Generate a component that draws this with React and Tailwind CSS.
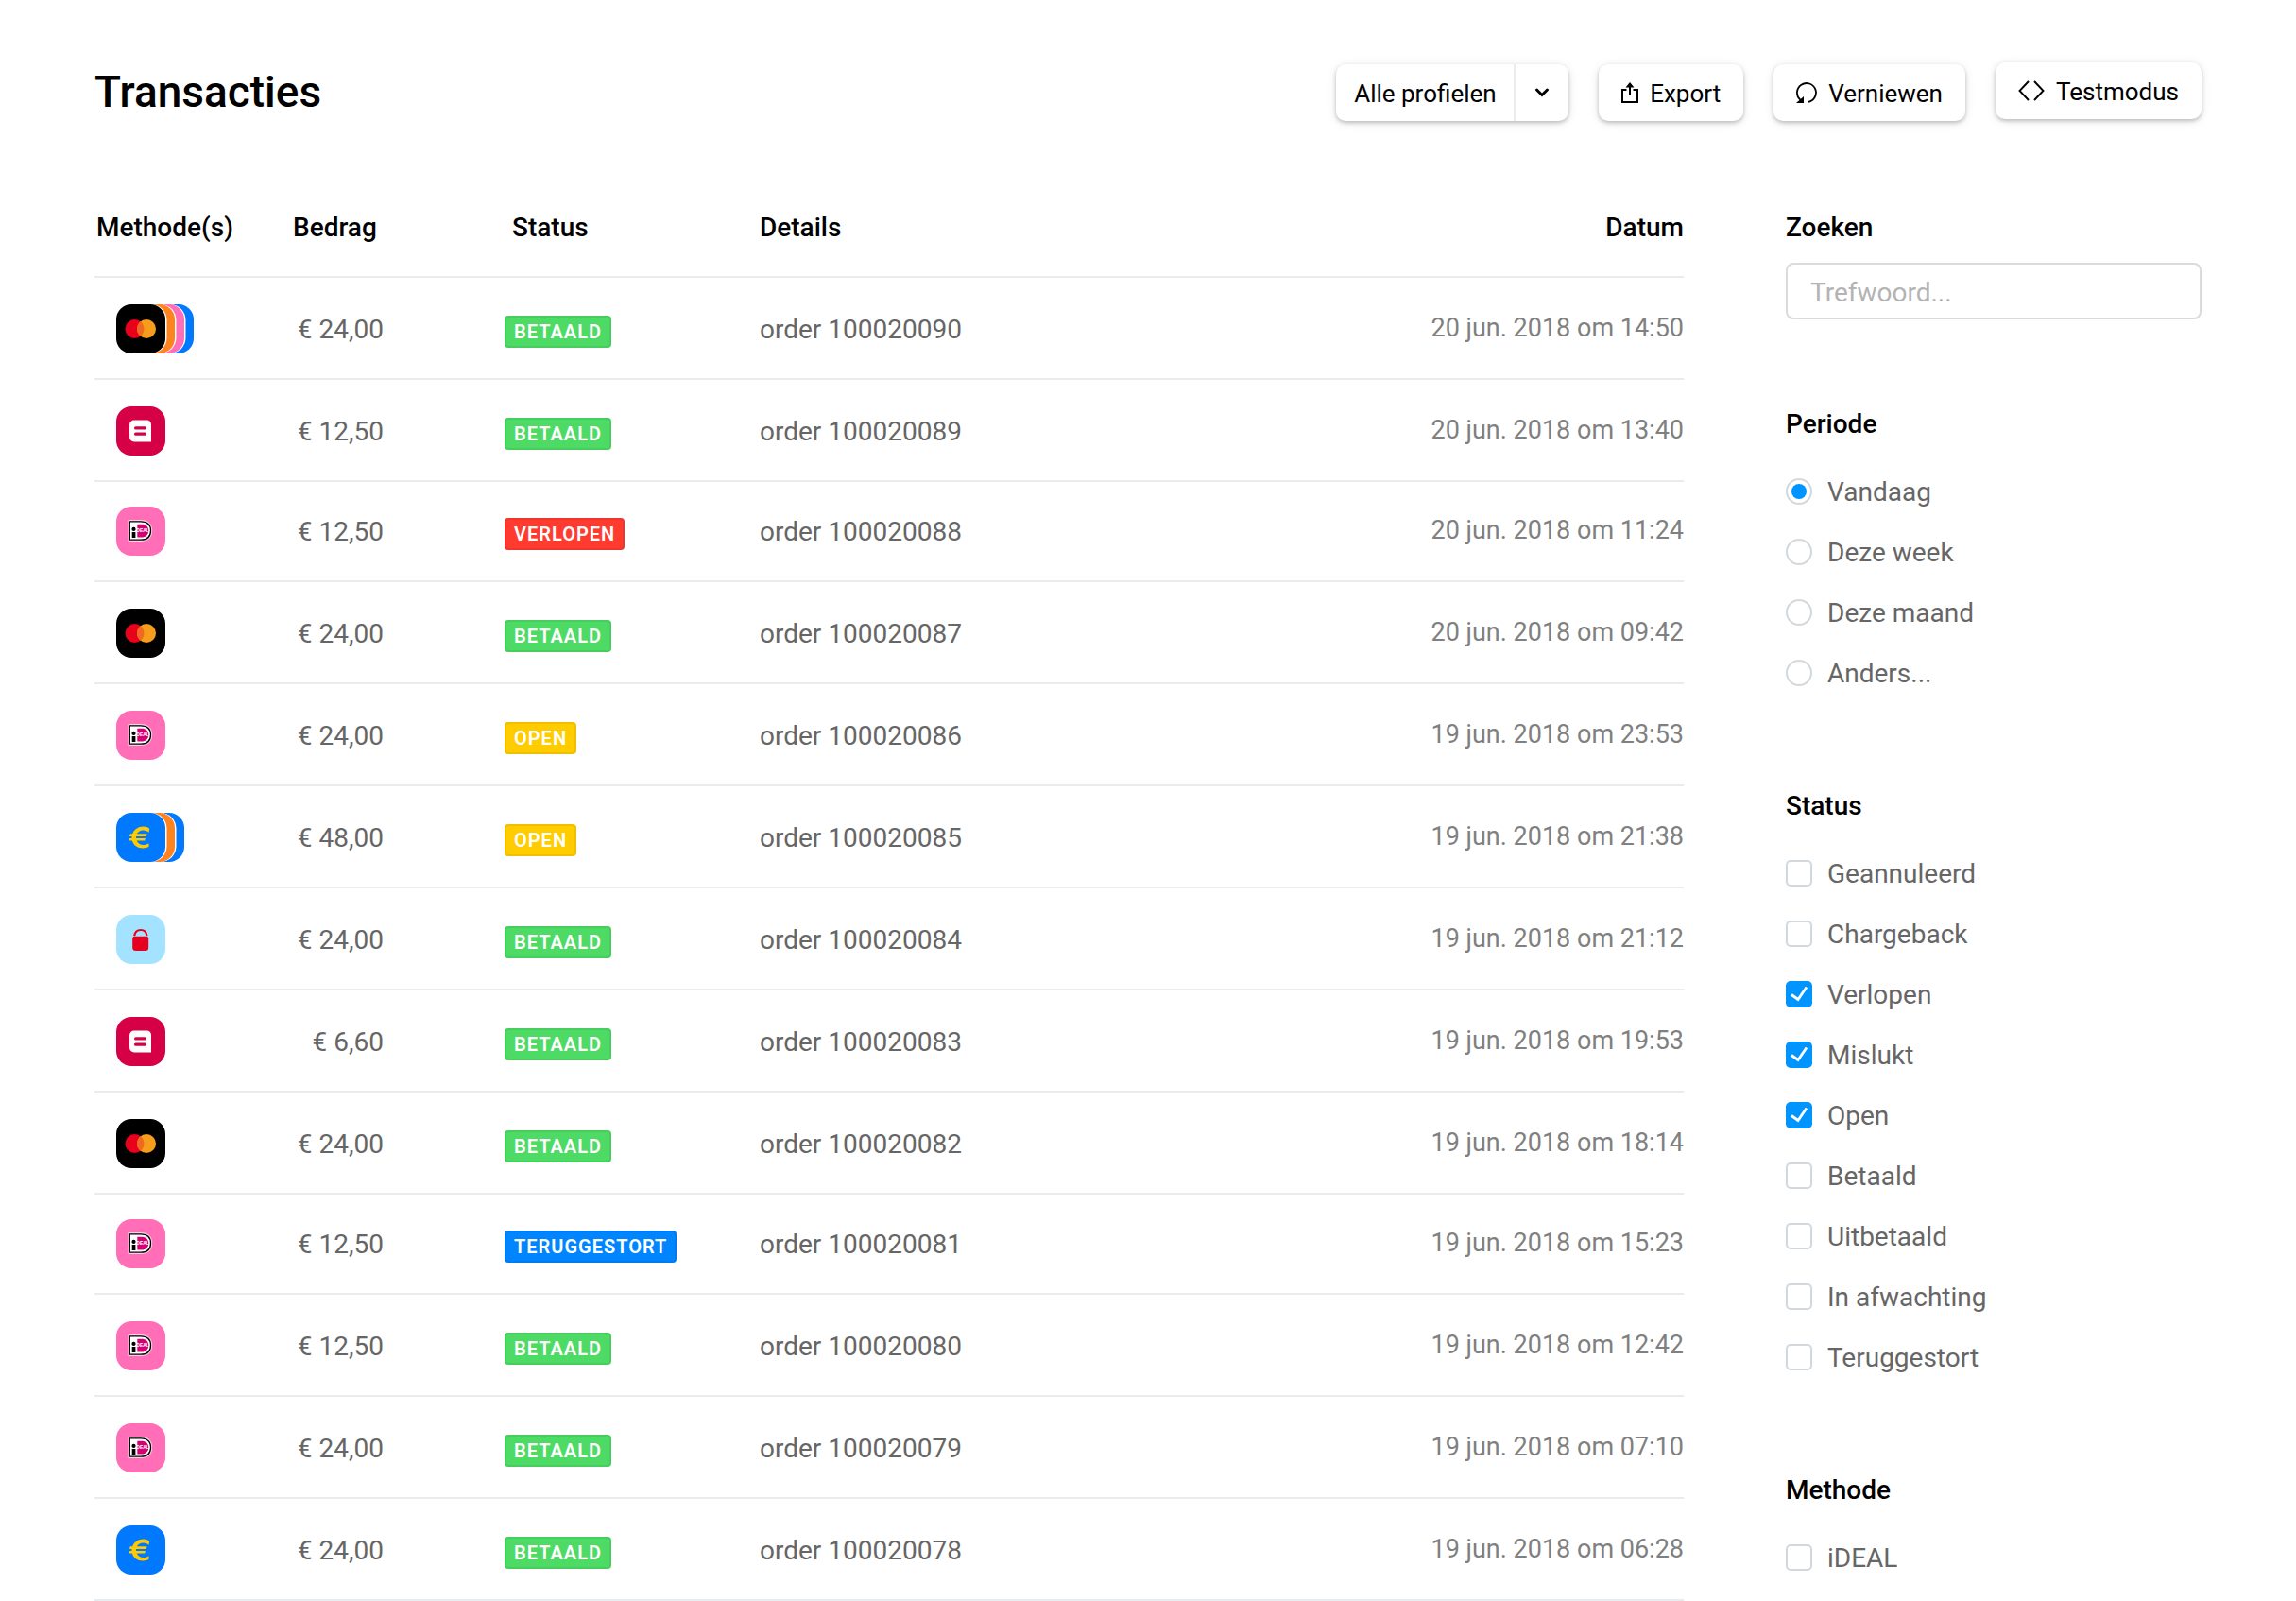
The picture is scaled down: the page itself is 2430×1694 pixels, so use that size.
import { useState } from "react";

const TRANSACTIONS = [
  { methods: ["mastercard", "orange", "pink", "blue"], amount: "€ 24,00", status: "Betaald", order: "100020090", date: "20 jun. 2018 om 14:50" },
  { methods: ["bancontact"], amount: "€ 12,50", status: "Betaald", order: "100020089", date: "20 jun. 2018 om 13:40" },
  { methods: ["ideal"], amount: "€ 12,50", status: "Verlopen", order: "100020088", date: "20 jun. 2018 om 11:24", compact: true },
  { methods: ["mastercard"], amount: "€ 24,00", status: "Betaald", order: "100020087", date: "20 jun. 2018 om 09:42" },
  { methods: ["ideal"], amount: "€ 24,00", status: "Open", order: "100020086", date: "19 jun. 2018 om 23:53" },
  { methods: ["euro", "orange", "blue"], amount: "€ 48,00", status: "Open", order: "100020085", date: "19 jun. 2018 om 21:38" },
  { methods: ["lock"], amount: "€ 24,00", status: "Betaald", order: "100020084", date: "19 jun. 2018 om 21:12" },
  { methods: ["bancontact"], amount: "€ 6,60", status: "Betaald", order: "100020083", date: "19 jun. 2018 om 19:53" },
  { methods: ["mastercard"], amount: "€ 24,00", status: "Betaald", order: "100020082", date: "19 jun. 2018 om 18:14" },
  { methods: ["ideal"], amount: "€ 12,50", status: "Teruggestort", order: "100020081", date: "19 jun. 2018 om 15:23", compact: true },
  { methods: ["ideal"], amount: "€ 12,50", status: "Betaald", order: "100020080", date: "19 jun. 2018 om 12:42" },
  { methods: ["ideal"], amount: "€ 24,00", status: "Betaald", order: "100020079", date: "19 jun. 2018 om 07:10" },
  { methods: ["euro"], amount: "€ 24,00", status: "Betaald", order: "100020078", date: "19 jun. 2018 om 06:28" },
];

const METHOD_COLORS = {
  mastercard: "#000000",
  bancontact: "#d50045",
  ideal: "#ff6eb6",
  euro: "#0079ff",
  lock: "#a4e3ff",
  orange: "#ff8420",
  pink: "#ff6eb6",
  blue: "#0079ff",
};

const STATUS_STYLES = {
  Betaald: "bg-[#4dda65] border-[#46cd5e]",
  Verlopen: "bg-[#ff3b30] border-[#ee362c]",
  Open: "bg-[#ffcc00] border-[#efbf00]",
  Teruggestort: "bg-[#0085ff] border-[#007bed]",
};

function MethodGlyph({ name }) {
  if (name === "mastercard") {
    return (
      <g>
        <circle cx="19.5" cy="26" r="10" fill="#e8001c" />
        <circle cx="32" cy="26" r="10" fill="#f69d1c" />
        <path d="M25.75 18.2a10 10 0 0 1 0 15.6a10 10 0 0 1 0-15.6z" fill="#ef6a20" />
      </g>
    );
  }
  if (name === "bancontact") {
    return (
      <g>
        <path d="M19 14.5h13.500a4.500 4.500 0 0 1 4.500 4.500v18.500h-18a5 5 0 0 1-5-5v-13a5 5 0 0 1 5-5z" fill="#fff" />
        <rect x="19" y="21.300" width="13" height="3.200" rx="1.600" fill="#d50045" />
        <rect x="19" y="27.600" width="13" height="3.200" rx="1.600" fill="#d50045" />
      </g>
    );
  }
  if (name === "ideal") {
    return (
      <g>
        <path d="M12.500 14h13.500c8 0 12.200 4.500 12.200 11.500S34 37 26 37H12.500z" fill="#f3d3e4" />
        <path d="M14.300 15.900h11.500c7 0 10.700 3.700 10.700 9.600s-3.700 9.700-10.700 9.700H14.300z" fill="#fff" stroke="#000" strokeWidth="1.300" />
        <path d="M22.300 18.700h4.200c5 0 7.700 2.500 7.700 6.800s-2.700 7-7.700 7h-4.200z" fill="#d50072" />
        <circle cx="18.500" cy="23.900" r="2.100" />
        <rect x="16.700" y="27" width="3.700" height="6" />
        <text x="21.300" y="26.600" fontSize="5" fontWeight="700" fontFamily="Liberation Sans, sans-serif" fill="#fff">DEAL</text>
      </g>
    );
  }
  if (name === "euro") {
    return (
      <g fill="#ffcb00">
        <path
          d="M35.200 16.800l-.7 3.900c-1.800-1.600-3.700-2.300-5.800-2.300-3.500 0-6 2-6.900 3.900h10.700l-.7 2.700H21c-.1.600-.1 1.200 0 1.900h9.900l-.7 2.600h-8.500c1 2.700 3.600 4.500 7.200 4.500 2.200 0 4-.6 5.600-1.800v3.900c-1.800.9-3.900 1.400-6.200 1.400-5.800 0-10.100-3.200-11.400-8H13l.8-2.600h2.700c-.1-.6-.1-1.300 0-1.900h-2.600l.8-2.700h2.500c1.700-4.600 6-7.700 11.500-7.700 2.500 0 4.700.8 6.500 2.200z"
        />
      </g>
    );
  }
  if (name === "lock") {
    return (
      <g>
        <path d="M19.200 22.200c.6-3.800 3-6.200 6.700-6.200s6.100 2.400 6.500 6.200" fill="none" stroke="#e6001f" strokeWidth="2.200" />
        <path d="M18.500 22.800h14.400l1.300 1.400v10.300a3.500 3.500 0 0 1-3.500 3.500H20.700a3.500 3.500 0 0 1-3.500-3.500V24.200z" fill="#e6001f" />
      </g>
    );
  }
  return null;
}

function MethodIcons({ methods }) {
  const width = 54 + (methods.length - 1) * 10;
  const layers = methods.map((name, index) => ({ name, x: index * 10 })).reverse();
  return (
    <svg className="block h-[52px]" width={width} height="52" viewBox={`0 0 ${width} 52`} role="img" aria-label={methods[0]}>
      {layers.map(({ name, x }) => (
        <g key={x}>
          {x < (methods.length - 1) * 10 && <rect x={x} width="53.5" height="52" rx="16.500" fill="#fff" />}
          <rect x={x} width="52" height="52" rx="16" fill={METHOD_COLORS[name]} />
        </g>
      ))}
      <MethodGlyph name={methods[0]} />
    </svg>
  );
}

function StatusBadge({ status }) {
  return (
    <span className={`inline-block h-[34px] rounded-[4px] border-2 px-2 text-[20px] leading-[31px] font-semibold tracking-wider text-white uppercase align-top ${STATUS_STYLES[status]}`}>
      {status}
    </span>
  );
}

const BUTTON = "flex h-[60px] items-center rounded-[10px] bg-white text-[26px] text-black shadow-[0_2px_4px_rgba(0,0,0,0.22),0_2px_12px_rgba(0,0,0,0.09)]";

function ExportIcon() {
  return (
    <svg width="18" height="22" viewBox="0 0 18 22" aria-hidden="true">
      <path d="M5.500 8H1v13h16V8h-4.500M9 14V4" fill="none" stroke="#000" strokeWidth="2" />
      <path d="M9 0l4.500 5.500h-9z" />
    </svg>
  );
}

function RefreshIcon() {
  return (
    <svg width="22" height="22" viewBox="0 0 22 22" aria-hidden="true">
      <path d="M12.500 20.900A10 10 0 1 0 4 18.200l2.500 1.800" fill="none" stroke="#000" strokeWidth="1.800" />
      <path d="M8 15v7H0z" />
    </svg>
  );
}

function CodeIcon() {
  return (
    <svg width="28" height="22" viewBox="0 0 28 22" aria-hidden="true">
      <path d="M11 1L1.500 11l9.500 10M17 1l9.500 10L17 21" fill="none" stroke="#000" strokeWidth="1.900" />
    </svg>
  );
}

function ProfileSelect() {
  return (
    <div className={`${BUTTON} relative`}>
      <select aria-label="Profiel" className="h-full appearance-none rounded-[10px] bg-transparent pt-0.5 pr-[76px] pl-[19px]">
        <option>Alle profielen</option>
      </select>
      <span className="pointer-events-none absolute inset-y-0 right-0 grid w-[58px] place-items-center border-l-2 border-[#ececec]">
        <svg width="16" height="12" viewBox="0 0 16 12" aria-hidden="true">
          <path d="M2.500 3l5.500 5.500L13.500 3" fill="none" stroke="#000" strokeWidth="3" strokeLinecap="round" />
        </svg>
      </span>
    </div>
  );
}

function ActionButton({ icon, label }) {
  return (
    <button type="button" className={`${BUTTON} gap-3 px-6`}>
      {icon}
      <span className="pt-0.5">{label}</span>
    </button>
  );
}

function Option({ type, name, label, checked, onChange }) {
  const box =
    type === "radio"
      ? "rounded-full border-2 border-[#d3d8dc]"
      : "rounded-[5px] border-2 border-[#d3d8dc] checked:border-[#0094ff] checked:bg-[#0094ff]";
  return (
    <label className="flex h-7 items-center gap-4 text-[28px] leading-7 text-[#666666]">
      <span className="grid size-7 shrink-0 place-items-center">
        <input type={type} name={name} checked={checked} onChange={onChange} className={`col-start-1 row-start-1 size-7 appearance-none bg-white ${box}`} />
        {checked && type === "radio" && <span className="pointer-events-none z-10 col-start-1 row-start-1 size-4 rounded-full bg-[#0094ff]" />}
        {checked && type === "checkbox" && (
          <svg className="pointer-events-none z-10 col-start-1 row-start-1" width="28" height="28" viewBox="0 0 28 28" aria-hidden="true">
            <path d="M6 14.500l7 5L22 6.500" fill="none" stroke="#fff" strokeWidth="2.800" />
          </svg>
        )}
      </span>
      <span className="pt-0.5">{label}</span>
    </label>
  );
}

function FilterGroup({ title, children }) {
  return (
    <fieldset>
      <legend className="text-[28px] leading-[34px] font-medium text-black">{title}</legend>
      <div className="mt-10 flex flex-col gap-9">{children}</div>
    </fieldset>
  );
}

const PERIODS = ["Vandaag", "Deze week", "Deze maand", "Anders..."];
const STATUSES = ["Geannuleerd", "Chargeback", "Verlopen", "Mislukt", "Open", "Betaald", "Uitbetaald", "In afwachting", "Teruggestort"];

function Filters() {
  const [period, setPeriod] = useState("Vandaag");
  const [selected, setSelected] = useState(["Verlopen", "Mislukt", "Open"]);
  const toggle = (name) =>
    setSelected((list) => (list.includes(name) ? list.filter((item) => item !== name) : [...list, name]));

  return (
    <aside className="w-[440px] shrink-0">
      <label htmlFor="search" className="block text-[28px] leading-[34px] font-medium text-black">Zoeken</label>
      <input
        id="search"
        type="text"
        placeholder="Trefwoord..."
        className="mt-5 mb-[94px] block h-[60px] w-full rounded-lg border-2 border-[#d8dcdf] px-6 pt-0.5 text-[28px] placeholder:text-[#b3b3b3]"
      />
      <div className="flex flex-col gap-[110px]">
        <FilterGroup title="Periode">
          {PERIODS.map((name) => (
            <Option key={name} type="radio" name="period" label={name} checked={period === name} onChange={() => setPeriod(name)} />
          ))}
        </FilterGroup>
        <FilterGroup title="Status">
          {STATUSES.map((name) => (
            <Option key={name} type="checkbox" name="status" label={name} checked={selected.includes(name)} onChange={() => toggle(name)} />
          ))}
        </FilterGroup>
        <FilterGroup title="Methode">
          <Option type="checkbox" name="method" label="iDEAL" checked={selected.includes("iDEAL")} onChange={() => toggle("iDEAL")} />
        </FilterGroup>
      </div>
    </aside>
  );
}

function TransactionTable() {
  return (
    <table className="w-full min-w-0 flex-1 table-fixed border-separate border-spacing-0 text-[28px] leading-8 text-[#666666]">
      <colgroup>
        <col className="w-[210px]" />
        <col className="w-[224px]" />
        <col className="w-[270px]" />
        <col />
        <col className="w-[400px]" />
      </colgroup>
      <thead className="text-left leading-[34px] text-black [&_th]:border-b-2 [&_th]:border-[#e8ecef] [&_th]:pb-[34px] [&_th]:font-medium">
        <tr>
          <th scope="col" className="pl-0.5">Methode(s)</th>
          <th scope="col">Bedrag</th>
          <th scope="col" className="pl-2">Status</th>
          <th scope="col">Details</th>
          <th scope="col" className="text-right">Datum</th>
        </tr>
      </thead>
      <tbody className="[&_td]:border-b-2 [&_td]:border-[#e8ecef] [&_td]:pb-[26px]">
        {TRANSACTIONS.map((row) => (
          <tr key={row.order} className={row.compact ? "[&>td]:pt-[26px]" : "[&>td]:pt-7"}>
            <td className="pl-[23px]"><MethodIcons methods={row.methods} /></td>
            <td className="pr-[128px] text-right whitespace-nowrap"><div className="pt-0.5">{row.amount}</div></td>
            <td><div className="pt-1.5"><StatusBadge status={row.status} /></div></td>
            <td><div className="pt-0.5">order {row.order}</div></td>
            <td className="text-right text-[27px] text-[#808080]"><div className="pb-0.5">{row.date}</div></td>
          </tr>
        ))}
      </tbody>
    </table>
  );
}

export default function App() {
  return (
    <div className="bg-white px-[100px] pt-[66px] font-[Roboto,sans-serif]">
      <header className="flex items-start justify-between">
        <h1 className="text-[46px] leading-[62px] font-medium text-black">Transacties</h1>
        <div className="flex items-start gap-8">
          <div className="flex gap-8 pt-0.5">
            <ProfileSelect />
            <ActionButton icon={<ExportIcon />} label="Export" />
            <ActionButton icon={<RefreshIcon />} label="Verniewen" />
          </div>
          <ActionButton icon={<CodeIcon />} label="Testmodus" />
        </div>
      </header>
      <main className="mt-24 flex items-start gap-[108px]">
        <TransactionTable />
        <Filters />
      </main>
    </div>
  );
}
